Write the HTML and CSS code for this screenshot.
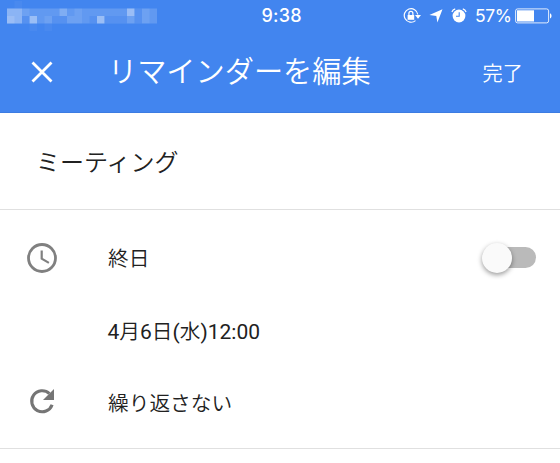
FILE: index.html
```html
<!DOCTYPE html>
<html lang="ja">
<head>
<meta charset="utf-8">
<title>リマインダーを編集</title>
<link rel="stylesheet" href="styles.css">
</head>
<body>
<header class="top">
  <div class="status">
    <svg class="carrier" viewBox="0 0 20 4" preserveAspectRatio="none" fill="#fff">
      <path opacity=".04" d="M1 0h1v1H1zM3 3h1v1H3zM5 3h1v1H5z"/>
      <path opacity=".17" d="M0 1h20v2H0z"/>
      <path opacity=".27" d="M0 1h2v2H0zM16 1h1v1h-1z"/>
      <path opacity=".13" d="M0 2h1v1H0zM7 1h1v1H7zM16 1h1v1h-1z"/>
      <path opacity=".36" d="M3 2h1v1H3zM12 2h1v1h-1z"/>
      <path opacity=".08" d="M2 1h1v1H2zM5 2h1v1H5zM7 1h1v1H7zM9 1h1v2H9zM8 2h1v1H8zM16 2h1v1h-1zM18 1h1v2h-1z"/>
      <path fill="#4285ef" opacity=".35" d="M2 2h1v1H2zM6 2h2v1H6zM11 2h1v1h-1zM13 2h3v1h-3zM17 1h1v2h-1z"/>
    </svg>
    <span class="time">9:38</span>
    <div class="indicators">
      <svg class="lock" viewBox="0 0 18 16" fill="none" stroke="#fff">
        <path d="M12.5 12.6A6.8 6.8 0 1 1 14.8 6.5" stroke-width="1.2"/>
        <path d="M12 7.1h6L15 10.8z" fill="#fff" stroke="none"/>
        <path d="M4.6 7h6.6v4.8H4.6z" fill="#fff" stroke="none"/>
        <path d="M5.9 7V5.4a2 2 0 0 1 4 0V7" stroke-width="1.2"/>
      </svg>
      <svg class="arrow" viewBox="0 0 14 14" fill="#fff"><path d="M13.5.3 8.4 13.4 7.3 6.9.4 6.1z"/></svg>
      <svg class="alarm" viewBox="0 0 16 15">
        <circle cx="8" cy="8" r="6.4" fill="#fff"/>
        <path d="M.9 4A5 5 0 0 1 4.2.9M11.8.9A5 5 0 0 1 15.1 4" stroke="#fff" stroke-width="1.2" fill="none"/>
        <path d="M8.2 4.2v4.1H5" stroke="#4285ef" stroke-width="1.1" fill="none"/>
      </svg>
      <span class="percent">57%</span>
      <svg class="battery" viewBox="0 0 37 16">
        <rect x=".6" y=".9" width="33" height="14" rx="2" fill="none" stroke="#fff" stroke-opacity=".85"/>
        <path d="M2 2.3h17v11.2H2z" fill="#fff"/>
        <path d="M35 5.3c2 .7 2 4.5 0 5.2z" fill="#fff"/>
      </svg>
    </div>
  </div>
  <div class="bar">
    <svg class="close" viewBox="0 0 22 22"><path d="m1.5 1.5 19 19m0-19-19 19" stroke="#fff" stroke-width="2.8"/></svg>
    <h1 class="title">リマインダーを編集</h1>
    <span class="done">完了</span>
  </div>
</header>
<section class="name">ミーティング</section>
<main class="options">
  <div class="row allday">
    <svg class="icon" viewBox="0 0 30 30" fill="none" stroke="#808080">
      <circle cx="15" cy="15" r="13.5" stroke-width="2.8"/>
      <path d="M14.7 7.4v8.3l7.2 4.2" stroke-width="2.2"/>
    </svg>
    <span class="label">終日</span>
    <span class="switch"><span class="knob"></span></span>
  </div>
  <div class="row date"><span class="label"><b>4</b>月<b>6</b>日<b>(</b>水<b>)12:00</b></span></div>
  <div class="row repeat">
    <svg class="icon" viewBox="0 0 30 30">
      <path d="M25.1 17.7A10.5 10.5 0 1 1 22.4 6.6" fill="none" stroke="#757575" stroke-width="3.1"/>
      <path d="M27 2v11H16z" fill="#757575"/>
    </svg>
    <span class="label">繰り返さない</span>
  </div>
</main>
</body>
</html>
```
FILE: styles.css
```css
* { box-sizing: border-box; }
body {
  margin: 0;
  background: #fff;
  color: #212121;
  font-family: Roboto, "Noto Sans CJK JP", sans-serif;
}
svg { display: block; flex: none; }
.top {
  height: 113px;
  background: #4285ef;
  color: #fff;
  border-bottom: 1px solid #3c7ce2;
}
.status {
  display: grid;
  grid-template-columns: 261.5px 1fr auto;
  align-items: center;
  height: 31px;
  padding-right: 8px;
}
.carrier { width: 150px; height: 30px; margin-left: 7px; }
.time {
  font: 500 18px/30px Inter, sans-serif;
  letter-spacing: .2px;
}
.indicators { display: flex; align-items: center; height: 31px; }
.lock { width: 18px; height: 16px; margin-right: 8px; }
.arrow { width: 14px; height: 14px; margin-right: 8px; }
.alarm { width: 16px; height: 15px; margin-right: 8px; }
.percent { width: 36px; margin-right: 4px; font: 400 17.5px/30px Inter, sans-serif; letter-spacing: -.4px; white-space: nowrap; }
.battery { width: 37px; height: 16px; }
.bar {
  display: flex;
  align-items: center;
  height: 81px;
  padding: 0 37px 0 31px;
}
.close { width: 22px; height: 22px; margin-right: 55px; }
.title {
  flex: 1;
  margin: 0;
  padding-top: 1px;
  font-size: 29.2px;
  line-height: 40px;
  font-weight: 350;
  white-space: nowrap;
}
.done { padding-top: 5px; font-size: 20.2px; font-weight: 350; line-height: 30px; }
.name {
  height: 97px;
  padding-left: 36px;
  border-bottom: 1px solid #e0e0e0;
  font-size: 24px;
  line-height: 101px;
  font-weight: 350;
}
.options {
  height: 239px;
  padding-top: 12px;
  border-bottom: 1px solid #e0e0e0;
}
.row {
  display: flex;
  align-items: center;
  height: 72px;
  padding: 0 24px 0 27px;
}
.icon { width: 30px; height: 30px; }
.label { margin-left: 51px; padding-top: 2px; font-size: 20.7px; line-height: 30px; font-weight: 350; }
.label b { font-size: 21px; font-weight: 400; }
.date .label { margin-left: 80.5px; padding-top: 4px; }
.repeat .label { padding-top: 4px; }
.switch {
  display: flex;
  align-items: center;
  width: 52px;
  height: 21px;
  margin-left: auto;
  margin-top: -1px;
  border-radius: 11px;
  background: #bababa;
}
.knob {
  flex: none;
  width: 30px;
  height: 30px;
  margin-left: -2px;
  border-radius: 50%;
  background: #fafafa;
  box-shadow: 0 2px 5px rgba(0, 0, 0, .4);
}
```
